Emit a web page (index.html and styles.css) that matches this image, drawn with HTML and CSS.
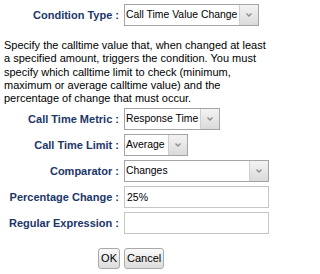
FILE: index.html
```html
<!DOCTYPE html>
<html>
<head>
<meta charset="utf-8">
<link rel="stylesheet" href="styles.css">
</head>
<body>
<div class="form">
  <div class="grid">
    <label class="lbl">Condition Type :</label>
    <div class="field"><div class="sel w-type"><span class="val">Call Time Value Change</span><span class="arr"><svg width="8" height="6" viewBox="0 0 8 6"><path d="M1.5 1.5 L4 4 L6.5 1.5" fill="none" stroke="#8a8f96" stroke-width="1.4"/></svg></span></div></div>
  </div>
  <p class="desc">Specify the calltime value that, when changed at least a specified amount, triggers the condition. You must specify which calltime limit to check (minimum, maximum or average calltime value) and the percentage of change that must occur.</p>
  <div class="grid">
    <label class="lbl">Call Time Metric :</label>
    <div class="field"><div class="sel w-metric"><span class="val">Response Time</span><span class="arr"><svg width="8" height="6" viewBox="0 0 8 6"><path d="M1.5 1.5 L4 4 L6.5 1.5" fill="none" stroke="#8a8f96" stroke-width="1.4"/></svg></span></div></div>
    <label class="lbl">Call Time Limit :</label>
    <div class="field"><div class="sel w-limit"><span class="val">Average</span><span class="arr"><svg width="8" height="6" viewBox="0 0 8 6"><path d="M1.5 1.5 L4 4 L6.5 1.5" fill="none" stroke="#8a8f96" stroke-width="1.4"/></svg></span></div></div>
    <label class="lbl">Comparator :</label>
    <div class="field"><div class="sel w-comp"><span class="val">Changes</span><span class="arr"><svg width="8" height="6" viewBox="0 0 8 6"><path d="M1.5 1.5 L4 4 L6.5 1.5" fill="none" stroke="#8a8f96" stroke-width="1.4"/></svg></span></div></div>
    <label class="lbl">Percentage Change :</label>
    <div class="field"><div class="inp">25%</div></div>
    <label class="lbl">Regular Expression :</label>
    <div class="field"><div class="inp"></div></div>
  </div>
  <div class="grid buttons">
    <div class="bcell right"><button class="btn">OK</button></div>
    <div class="bcell"><button class="btn">Cancel</button></div>
  </div>
</div>
</body>
</html>
```
FILE: styles.css
```css
html, body {
  margin: 0;
  padding: 0;
  background: #fff;
}
body {
  font-family: "Liberation Sans", Arial, sans-serif;
  font-size: 11px;
  color: #000;
}
.form {
  width: 275px;
  box-sizing: border-box;
  padding: 4px 4px 0 4px;
}
.grid {
  display: grid;
  grid-template-columns: 116px 1fr;
  column-gap: 4px;
  row-gap: 4px;
  align-items: center;
}
.lbl {
  text-align: right;
  font-weight: bold;
  color: #1b3668;
  font-size: 11px;
  white-space: nowrap;
  padding-right: 1px;
}
.field {
  display: flex;
}
.sel {
  display: flex;
  align-items: stretch;
  height: 20px;
  border: 1px solid #a4a4a4;
  background: #fff;
}
.w-type { width: 133px; }
.w-metric { width: 94px; }
.w-limit { width: 62px; }
.w-comp { width: 143px; }
.val {
  flex: 1;
  padding: 0 0 0 1px;
  line-height: 19px;
  font-size: 10.4px;
  white-space: nowrap;
  overflow: hidden;
}
.arr {
  width: 18px;
  flex: none;
  border-left: 1px solid #cfcfcf;
  background: linear-gradient(#f3f3f3, #dadada);
  display: flex;
  align-items: center;
  justify-content: center;
}
.inp {
  width: 139px;
  height: 20px;
  line-height: 20px;
  padding: 0 2px;
  border: 1px solid #c6c6c6;
  background: #fff;
  font-size: 10.5px;
}
.desc {
  margin: 13px 0 2px 0;
  line-height: 13.33px;
}
.buttons {
  margin-top: 14px;
}
.bcell {
  display: flex;
}
.bcell.right {
  justify-content: flex-end;
}
.btn {
  font-family: "Liberation Sans", Arial, sans-serif;
  font-size: 11px;
  height: 21px;
  margin: 0;
  padding: 0 2px;
  border: 1px solid #a9a9a9;
  border-radius: 3px;
  background: linear-gradient(#fafafa, #dcdcdc);
  color: #000;
}
```
